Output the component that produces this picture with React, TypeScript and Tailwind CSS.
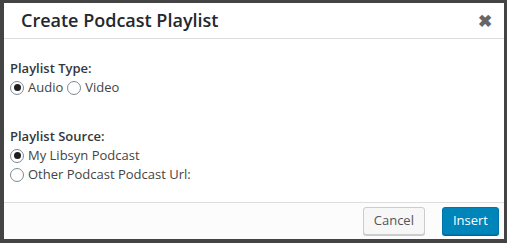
import React from "react";

function Radio({ checked }: { checked?: boolean }) {
  return (
    <span className="inline-flex w-[14px] h-[14px] rounded-full border border-[#7e8993] bg-white items-center justify-center shrink-0">
      {checked && <span className="w-[7px] h-[7px] rounded-full bg-[#1e1e1e]" />}
    </span>
  );
}

export default function App() {
  return (
    <div className="w-[507px] h-[243px] bg-[#444444] pt-[3px] pl-[4px]" style={{ fontFamily: '"Open Sans", sans-serif' }}>
      <div className="w-[500px] h-[236px] bg-white flex flex-col">
        <div className="h-[36px] border-b border-[#dddddd] flex items-center justify-between pl-[17px] pr-[12px] shrink-0">
          <h1 className="text-[18px] font-semibold text-[#23282d] leading-none -mt-[1px]">Create Podcast Playlist</h1>
          <span className="text-[#666] text-[17px] font-bold leading-none">✖</span>
        </div>
        <div className="flex-1 pl-[6px] pt-[20px] text-[13px] text-[#444] leading-[19px]">
          <div className="font-semibold text-[#32373c]">Playlist Type:</div>
          <div className="flex items-center gap-[4px]">
            <Radio checked />
            <span>Audio</span>
            <Radio />
            <span>Video</span>
          </div>
          <div className="h-[30px]" />
          <div className="font-semibold text-[#32373c]">Playlist Source:</div>
          <div className="flex items-center gap-[4px]">
            <Radio checked />
            <span>My Libsyn Podcast</span>
          </div>
          <div className="flex items-center gap-[4px]">
            <Radio />
            <span>Other Podcast Podcast Url:</span>
          </div>
        </div>
        <div className="h-[37px] border-t border-[#dddddd] bg-[#fcfcfc] flex items-center justify-end gap-[17px] pr-[5px] shrink-0">
          <button className="h-[28px] px-[10px] text-[13px] text-[#555] bg-[#f7f7f7] border border-[#cccccc] rounded-[3px] shadow-[0_1px_0_#ccc]">Cancel</button>
          <button className="h-[28px] px-[10px] text-[13px] text-white bg-[#0085ba] border border-[#0073aa] rounded-[3px] shadow-[0_1px_0_#006799]">Insert</button>
        </div>
      </div>
    </div>
  );
}
